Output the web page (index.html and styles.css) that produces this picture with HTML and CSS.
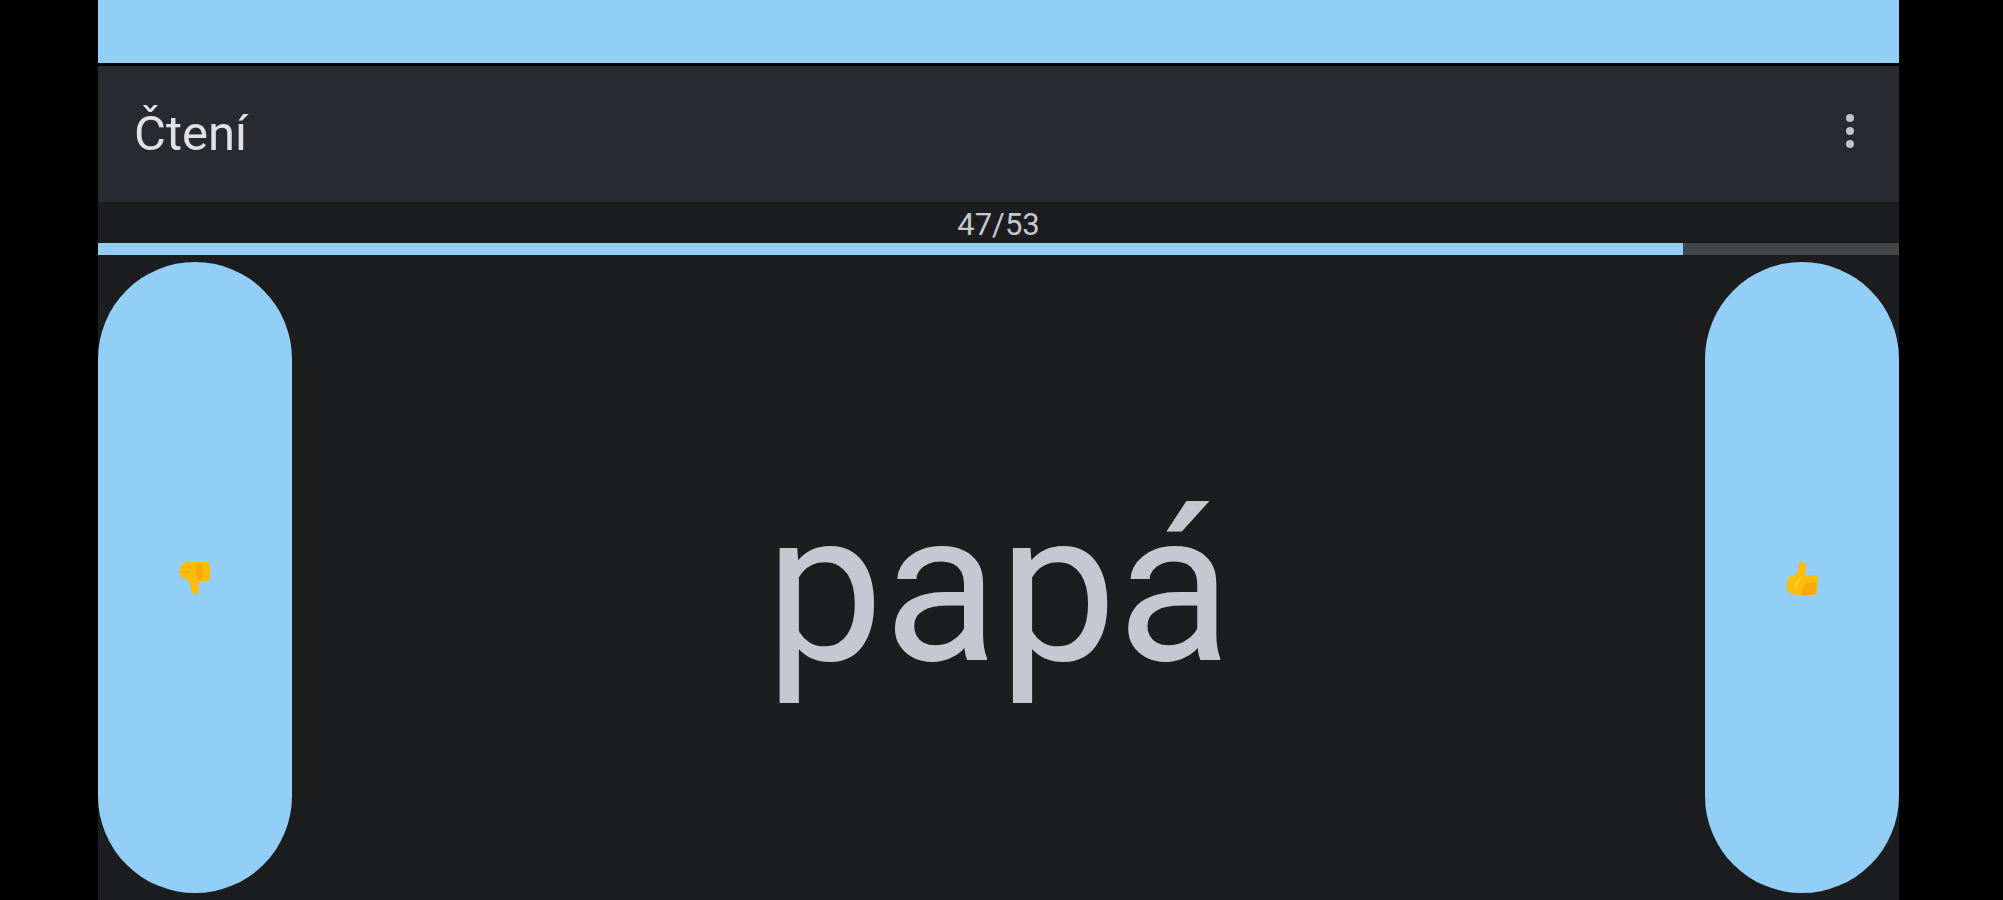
FILE: index.html
```html
<!DOCTYPE html>
<html lang="cs">
<head>
    <meta charset="UTF-8">
    <meta name="viewport" content="width=device-width, initial-scale=1.0">
    <title>Čtení</title>
    <link rel="stylesheet" href="styles.css">
</head>
<body>
    <div class="screen">
        <div class="status-bar"></div>
        <header class="toolbar">
            <h1>Čtení</h1>
            <button class="menu-button" type="button" aria-label="Menu">
                <svg width="10" height="38" viewBox="0 0 10 38">
                    <circle cx="5" cy="5" r="4"/>
                    <circle cx="5" cy="18" r="4"/>
                    <circle cx="5" cy="31" r="4"/>
                </svg>
            </button>
        </header>
        <div class="counter">
            <label for="progress">47/53</label>
            <progress id="progress" value="88" max="100"></progress>
        </div>
        <main class="card">
            <button class="answer" type="button" aria-label="Nevím">
                <svg width="32" height="34" viewBox="0 0 32 34">
                    <path fill="#fdbd08" d="M5 2Q9 0 14 1L28 1Q31 1 31 5L31 16Q31 20 27 20L20 20Q19 23 20 29Q20 33 16 33Q13 33 12 28Q11 22 8 18Q3 18 1 14Q0 11 1 8Q2 3 5 2Z"/>
                    <path fill="#f9a70c" d="M17 3Q23 0 24 8Q25 16 20 20Q16 16 17 3Z"/>
                    <path fill="none" stroke="#f6a70d" stroke-width="1" d="M3 7Q9 4 14 8M2 12Q8 9 14 13"/>
                </svg>
            </button>
            <p class="word">papá</p>
            <button class="answer" type="button" aria-label="Vím">
                <svg width="32" height="36" viewBox="0 0 32 36">
                    <path fill="#fdbd08" d="M13 4Q14 1 17 2Q20 3 20 8L19 16L28 15Q32 15 32 20L31 31Q31 35 27 35L11 35Q3 34 1 30Q0 25 2 19Q3 15 8 16Q13 11 13 4Z"/>
                    <path fill="#f9aa0b" d="M16 29Q20 21 29 22L31 24L30 32Q29 35 25 35L14 35Z"/>
                    <path fill="none" stroke="#ffd33f" stroke-width="2" d="M9 28Q10 22 15 19"/>
                </svg>
            </button>
        </main>
    </div>
</body>
</html>
```
FILE: styles.css
```css
* {
    box-sizing: border-box;
}
body {
    margin: 0;
    padding: 0 104px 0 98px;
    background: #000;
    color: #c6c8d1;
    font-family: Roboto, sans-serif;
}
.screen {
    display: flex;
    flex-direction: column;
    height: 100vh;
    background: #1b1d1e;
}
.status-bar {
    height: 66px;
    background: #92cef6;
    border-bottom: 3px solid #000;
}
.toolbar {
    display: flex;
    align-items: center;
    justify-content: space-between;
    height: 136px;
    padding: 0 36px;
    background: #272a31;
}
h1 {
    margin: 0;
    color: #e2e2e5;
    font-size: 49px;
    font-weight: 400;
    line-height: 56px;
}
button {
    border: none;
    cursor: pointer;
}
.menu-button {
    display: flex;
    padding: 4px 8px 8px;
    background: none;
}
.menu-button svg {
    fill: #c4c5c8;
}
.counter {
    display: flex;
    flex-direction: column;
    padding-top: 4px;
    text-align: center;
}
.counter label {
    font-size: 31px;
    line-height: 37px;
}
progress {
    display: block;
    width: 100%;
    height: 12px;
    border: none;
    background: #434648;
    appearance: none;
}
progress::-webkit-progress-bar {
    background: #434648;
}
progress::-webkit-progress-value {
    background: #92cef6;
}
.card {
    display: flex;
    flex: 1;
    align-items: stretch;
    justify-content: space-between;
    padding: 7px 0;
}
.answer {
    display: flex;
    align-items: center;
    justify-content: center;
    width: 194px;
    padding: 0;
    border-radius: 97px;
    background: #92cef6;
}
.word {
    align-self: center;
    margin: 0;
    padding-top: 20px;
    font-size: 211px;
    line-height: 248px;
}
```
